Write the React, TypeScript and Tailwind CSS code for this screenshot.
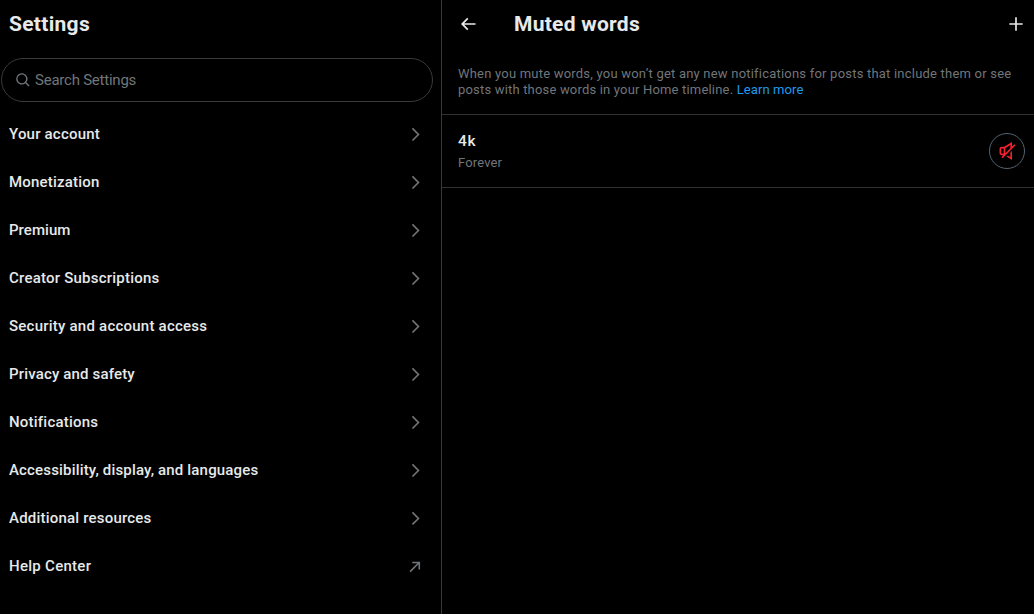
type Item = { label: string; tracking: string; external?: boolean };

const items: Item[] = [
  { label: "Your account", tracking: "tracking-[0.2px]" },
  { label: "Monetization", tracking: "tracking-[0.2px]" },
  { label: "Premium", tracking: "tracking-[0.05px]" },
  { label: "Creator Subscriptions", tracking: "tracking-[0.22px]" },
  { label: "Security and account access", tracking: "tracking-[0.23px]" },
  { label: "Privacy and safety", tracking: "tracking-[0.16px]" },
  { label: "Notifications", tracking: "tracking-[0.22px]" },
  { label: "Accessibility, display, and languages", tracking: "tracking-[0.17px]" },
  { label: "Additional resources", tracking: "tracking-[0.2px]" },
  { label: "Help Center", tracking: "tracking-[0.28px]", external: true },
];

const paths = {
  search:
    "M10.25 3.75a6.5 6.5 0 1 0 0 13 6.5 6.5 0 0 0 0-13zm-8.5 6.5a8.5 8.5 0 1 1 15.18 5.26l4.78 4.78-1.42 1.42-4.78-4.78A8.5 8.5 0 0 1 1.75 10.25z",
  chevron: "M14.586 12L7.543 4.96l1.414-1.42L17.414 12l-8.457 8.46-1.414-1.42L14.586 12z",
  external: "M8 6h10v10h-2V9.41L5.957 19.46l-1.414-1.42L14.586 8H8V6z",
  back: "M7.414 13l5.043 5.04-1.414 1.42L3.586 12l7.457-7.46 1.414 1.42L7.414 11H21v2H7.414z",
  plus: "M11 11V4h2v7h7v2h-7v7h-2v-7H4v-2h7z",
  muted:
    "M18 6.59V1.2L8.71 7H5.5C4.12 7 3 8.12 3 9.5v5C3 15.88 4.12 17 5.5 17h2.09l-2.3 2.29 1.42 1.42 15.5-15.5-1.42-1.42L18 6.59zm-8 8V8.55l6-3.75v3.79l-6 6zM5 9.5c0-.28.22-.5.5-.5H8v6H5.5c-.28 0-.5-.22-.5-.5v-5zm6.5 9.24l1.45-1.45L16 19.2V14l2-2v10.8l-6.5-4.06z",
};

function Icon({ name, className }: { name: keyof typeof paths; className: string }) {
  return (
    <svg viewBox="0 0 24 24" fill="currentColor" aria-hidden="true" className={className}>
      <path d={paths[name]} />
    </svg>
  );
}

export default function App() {
  return (
    <div className="flex h-[614px] w-[1034px] overflow-hidden bg-black font-['Roboto',sans-serif] text-[#e7e9ea]">
      <aside className="flex w-[442px] shrink-0 flex-col border-r border-[#38393b]">
        <h1 className="flex h-12 items-center pt-0.5 pl-[9px] text-[21px] font-bold tracking-[0.3px]">Settings</h1>
        <label className="mt-2.5 ml-px flex h-11 w-[432px] shrink-0 items-center gap-1 rounded-full border border-[#38393b] pl-[13px] text-[15px] text-[#71767b]">
          <Icon name="search" className="size-4" />
          <span className="tracking-[-0.23px]">Search Settings</span>
        </label>
        <nav className="mt-2">
          {items.map(({ label, tracking, external }) => (
            <a key={label} className="flex h-12 items-center justify-between pr-4 pl-[9px] text-[15px] font-medium">
              <span className={tracking}>{label}</span>
              <Icon name={external ? "external" : "chevron"} className="mt-px size-[18.75px] text-[#71767b]" />
            </a>
          ))}
        </nav>
      </aside>
      <main className="min-w-0 flex-1">
        <header className="flex h-12 items-center pr-2 pl-4">
          <button aria-label="Back"><Icon name="back" className="size-5" /></button>
          <h2 className="ml-9 flex-1 pt-0.5 text-[21px] font-bold tracking-[0.27px]">Muted words</h2>
          <button aria-label="Add"><Icon name="plus" className="size-5" /></button>
        </header>
        <p className="h-[67px] border-b border-[#2f3336] pt-[18px] pl-4 text-[13px] leading-4 whitespace-nowrap text-[#71767b]">
          <span className="tracking-[0.21px]">
            When you mute words, you won’t get any new notifications for posts that include them or see
          </span>
          <br />
          <span className="tracking-[0.18px]">posts with those words in your Home timeline. </span>
          <a className="tracking-[0.1px] text-[#1d9bf0]">Learn more</a>
        </p>
        <div className="flex h-[73px] items-center justify-between border-b border-[#2f3336] pr-[9px] pl-4">
          <div>
            <div className="text-[15.5px] leading-5 font-medium tracking-[0.7px]">4k</div>
            <div className="mt-1 text-[13px] leading-4 tracking-[0.15px] text-[#71767b]">Forever</div>
          </div>
          <button aria-label="Unmute" className="flex size-9 items-center justify-center rounded-full border border-[#536471] text-[#f4212e]">
            <Icon name="muted" className="size-5" />
          </button>
        </div>
      </main>
    </div>
  );
}
